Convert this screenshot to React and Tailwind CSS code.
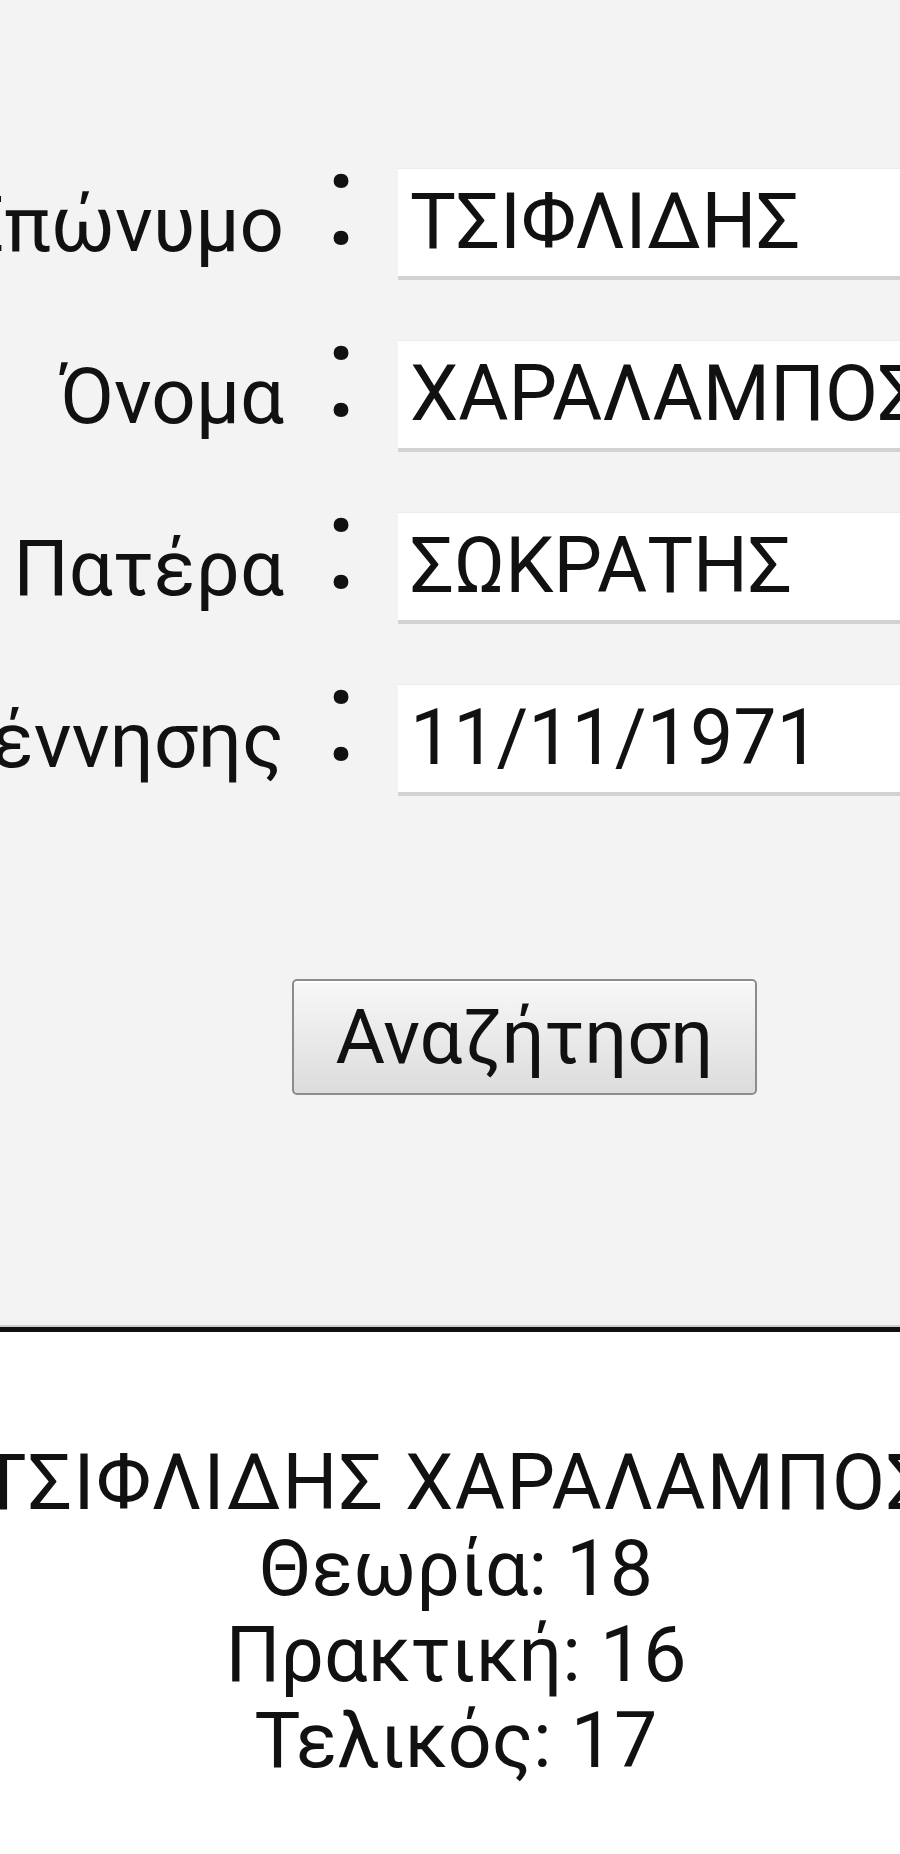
import React from "react";

const fields = [
  { label: "Επώνυμο", value: "ΤΣΙΦΛΙΔΗΣ" },
  { label: "Όνομα", value: "ΧΑΡΑΛΑΜΠΟΣ" },
  { label: "Πατέρα", value: "ΣΩΚΡΑΤΗΣ" },
  { label: "Ημ. Γέννησης", value: "11/11/1971" },
];

const grades = [
  { name: "Θεωρία", score: 18 },
  { name: "Πρακτική", score: 16 },
  { name: "Τελικός", score: 17 },
];

const FieldRow = ({ label, value }) => (
  <div className="flex h-[112px] items-center">
    <div className="flex w-[284px] shrink-0 justify-end">
      <span className="whitespace-nowrap text-[78px] text-[#111]">{label}</span>
    </div>
    <div className="flex w-[114px] shrink-0 justify-center self-start">
      <span className="mt-[-35px] text-[132px] leading-none text-[#111]">:</span>
    </div>
    <div className="flex h-[112px] w-[560px] shrink-0 items-center border-t border-b-[4px] border-t-[#ebebeb] border-b-[#d2d2d2] bg-white pl-[12px]">
      <span className="whitespace-nowrap text-[77px] text-[#111]">{value}</span>
    </div>
  </div>
);

const App = () => {
  return (
    <div
      className="flex h-[1854px] w-[900px] flex-col overflow-hidden bg-white"
      style={{ fontFamily: "Roboto, 'Noto Sans', sans-serif" }}
    >
      <div className="flex h-[1325px] shrink-0 flex-col bg-[#f3f3f3] pt-[168px]">
        <div className="flex flex-col gap-[60px]">
          {fields.map((f) => (
            <FieldRow key={f.label} label={f.label} value={f.value} />
          ))}
        </div>

        <div className="mt-[183px] pl-[292px]">
          <button
            type="button"
            className="flex h-[116px] w-[465px] items-center justify-center rounded-[5px] border-2 border-[#8c8c8c] bg-gradient-to-b from-[#f8f8f8] to-[#dcdcdc] text-[76px] text-[#111] shadow-[inset_0_2px_0_#ffffff]"
          >
            Αναζήτηση
          </button>
        </div>
      </div>

      <div className="h-[2px] shrink-0 bg-[#cfcfcf]" />
      <div className="h-[5px] shrink-0 bg-[#111]" />

      <div className="flex flex-col items-center pl-[12px] pt-[108px] text-center text-[77px] leading-[86px] text-[#111]">
        <div className="whitespace-nowrap tracking-[1.5px]">ΤΣΙΦΛΙΔΗΣ ΧΑΡΑΛΑΜΠΟΣ</div>
        {grades.map((g) => (
          <div key={g.name} className="whitespace-nowrap">
            {g.name}: {g.score}
          </div>
        ))}
      </div>
    </div>
  );
};

export default App;
